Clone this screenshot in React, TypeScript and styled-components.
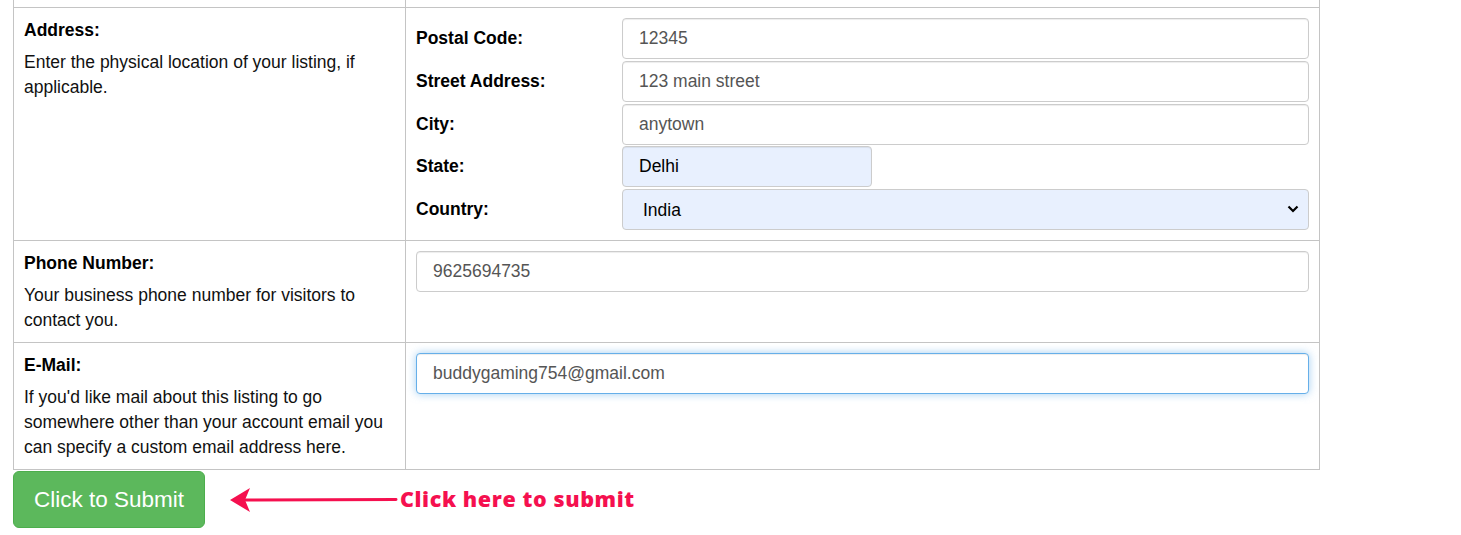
import React from 'react';
import styled, { createGlobalStyle } from 'styled-components';

const GlobalStyle = createGlobalStyle`
  html, body {
    margin: 0;
    padding: 0;
    background: #ffffff;
  }
  body {
    font-family: 'Liberation Sans', Arial, sans-serif;
    font-size: 17.5px;
    color: #000;
  }
`;

const BORDER = '#c4c4c4';

const Page = styled.div`
  padding-left: 13px;
  width: 1307px;
`;

const Table = styled.table`
  width: 100%;
  border-collapse: collapse;
  table-layout: fixed;
`;

const Cell = styled.td<{ $stub?: boolean }>`
  border: 1px solid ${BORDER};
  border-top: ${(p) => (p.$stub ? 'none' : `1px solid ${BORDER}`)};
  padding: ${(p) => (p.$stub ? '0' : '10px 10px 9px')};
  height: ${(p) => (p.$stub ? '7px' : 'auto')};
  vertical-align: top;
  line-height: 25px;
`;

const FieldCell = styled(Cell)`
  padding-bottom: 10px;
`;

const LabelCol = styled.col`
  width: 392px;
`;

const Title = styled.div`
  font-weight: bold;
  margin-bottom: 7px;
`;

const Desc = styled.div`
  color: #111;
`;

const FieldGrid = styled.div`
  display: grid;
  grid-template-columns: 206px 1fr;
  row-gap: 1.75px;
  align-items: center;
`;

const FieldLabel = styled.label`
  font-weight: bold;
`;

const Input = styled.input<{ $filled?: boolean; $focus?: boolean; $w?: string }>`
  box-sizing: border-box;
  height: 41px;
  width: ${(p) => p.$w || '100%'};
  padding: 0 16px;
  font-family: 'Liberation Sans', Arial, sans-serif;
  font-size: 17.5px;
  color: ${(p) => (p.$filled ? '#000' : '#555')};
  background: ${(p) => (p.$filled ? '#e8f0fe' : '#fff')};
  border: 1px solid ${(p) => (p.$focus ? '#66afe9' : '#ccc')};
  border-radius: 4px;
  box-shadow: ${(p) =>
    p.$focus
      ? 'inset 0 1px 1px rgba(0,0,0,.075), 0 0 8px rgba(102,175,233,.6)'
      : 'inset 0 1px 1px rgba(0,0,0,.075)'};
  outline: none;
`;

const SelectWrap = styled.div`
  position: relative;
`;

const Select = styled.select`
  box-sizing: border-box;
  width: 100%;
  height: 41px;
  padding: 0 20px;
  appearance: none;
  font-family: 'Liberation Sans', Arial, sans-serif;
  font-size: 17.5px;
  color: #000;
  background: #e8f0fe;
  border: 1px solid #ccc;
  border-radius: 4px;
  outline: none;
`;

const Chevron = styled.svg`
  position: absolute;
  right: 10px;
  top: 15px;
  pointer-events: none;
`;

const Footer = styled.div`
  display: flex;
  align-items: center;
  padding-top: 1px;
`;

const SubmitButton = styled.button`
  width: 192px;
  height: 57px;
  padding: 0;
  background: #5cb85c;
  border: 1px solid #4cae4c;
  border-radius: 6px;
  color: #fff;
  font-family: 'Liberation Sans', Arial, sans-serif;
  font-size: 22.5px;
  cursor: pointer;
`;

const Arrow = styled.svg`
  margin-left: 25px;
  display: block;
`;

const Note = styled.span`
  font-family: 'Open Sans', 'Noto Sans', sans-serif;
  font-weight: 800;
  font-size: 21.5px;
  letter-spacing: 0.6px;
  color: #f5104f;
  margin-left: 2px;
  padding-bottom: 3px;
`;

export default function App() {
  return (
    <Page>
      <GlobalStyle />
      <Table>
        <colgroup>
          <LabelCol />
          <col />
        </colgroup>
        <tbody>
          <tr>
            <Cell $stub />
            <Cell $stub />
          </tr>
          <tr>
            <Cell>
              <Title>Address:</Title>
              <Desc>Enter the physical location of your listing, if applicable.</Desc>
            </Cell>
            <FieldCell>
              <FieldGrid>
                <FieldLabel>Postal Code:</FieldLabel>
                <Input defaultValue="12345" />
                <FieldLabel>Street Address:</FieldLabel>
                <Input defaultValue="123 main street" />
                <FieldLabel>City:</FieldLabel>
                <Input defaultValue="anytown" />
                <FieldLabel>State:</FieldLabel>
                <Input $filled $w="250px" defaultValue="Delhi" />
                <FieldLabel>Country:</FieldLabel>
                <SelectWrap>
                  <Select defaultValue="India">
                    <option>India</option>
                  </Select>
                  <Chevron width="12" height="10" viewBox="0 0 12 10">
                    <path d="M1.5 2.5 L6 7 L10.5 2.5" fill="none" stroke="#000" strokeWidth="2.2" />
                  </Chevron>
                </SelectWrap>
              </FieldGrid>
            </FieldCell>
          </tr>
          <tr>
            <Cell>
              <Title>Phone Number:</Title>
              <Desc>Your business phone number for visitors to contact you.</Desc>
            </Cell>
            <Cell>
              <Input defaultValue="9625694735" />
            </Cell>
          </tr>
          <tr>
            <Cell>
              <Title>E-Mail:</Title>
              <Desc>
                If you'd like mail about this listing to go somewhere other than your account email you
                can specify a custom email address here.
              </Desc>
            </Cell>
            <Cell>
              <Input $focus defaultValue="buddygaming754@gmail.com" />
            </Cell>
          </tr>
        </tbody>
      </Table>
      <Footer>
        <SubmitButton>Click to Submit</SubmitButton>
        <Arrow width="168" height="30" viewBox="0 0 168 30">
          <line x1="14" y1="15" x2="166" y2="14.5" stroke="#f5104f" strokeWidth="3" strokeLinecap="round" />
          <path d="M0 15 L20 3 L15 15 L20 27 Z" fill="#f5104f" />
        </Arrow>
        <Note>Click here to submit</Note>
      </Footer>
    </Page>
  );
}
